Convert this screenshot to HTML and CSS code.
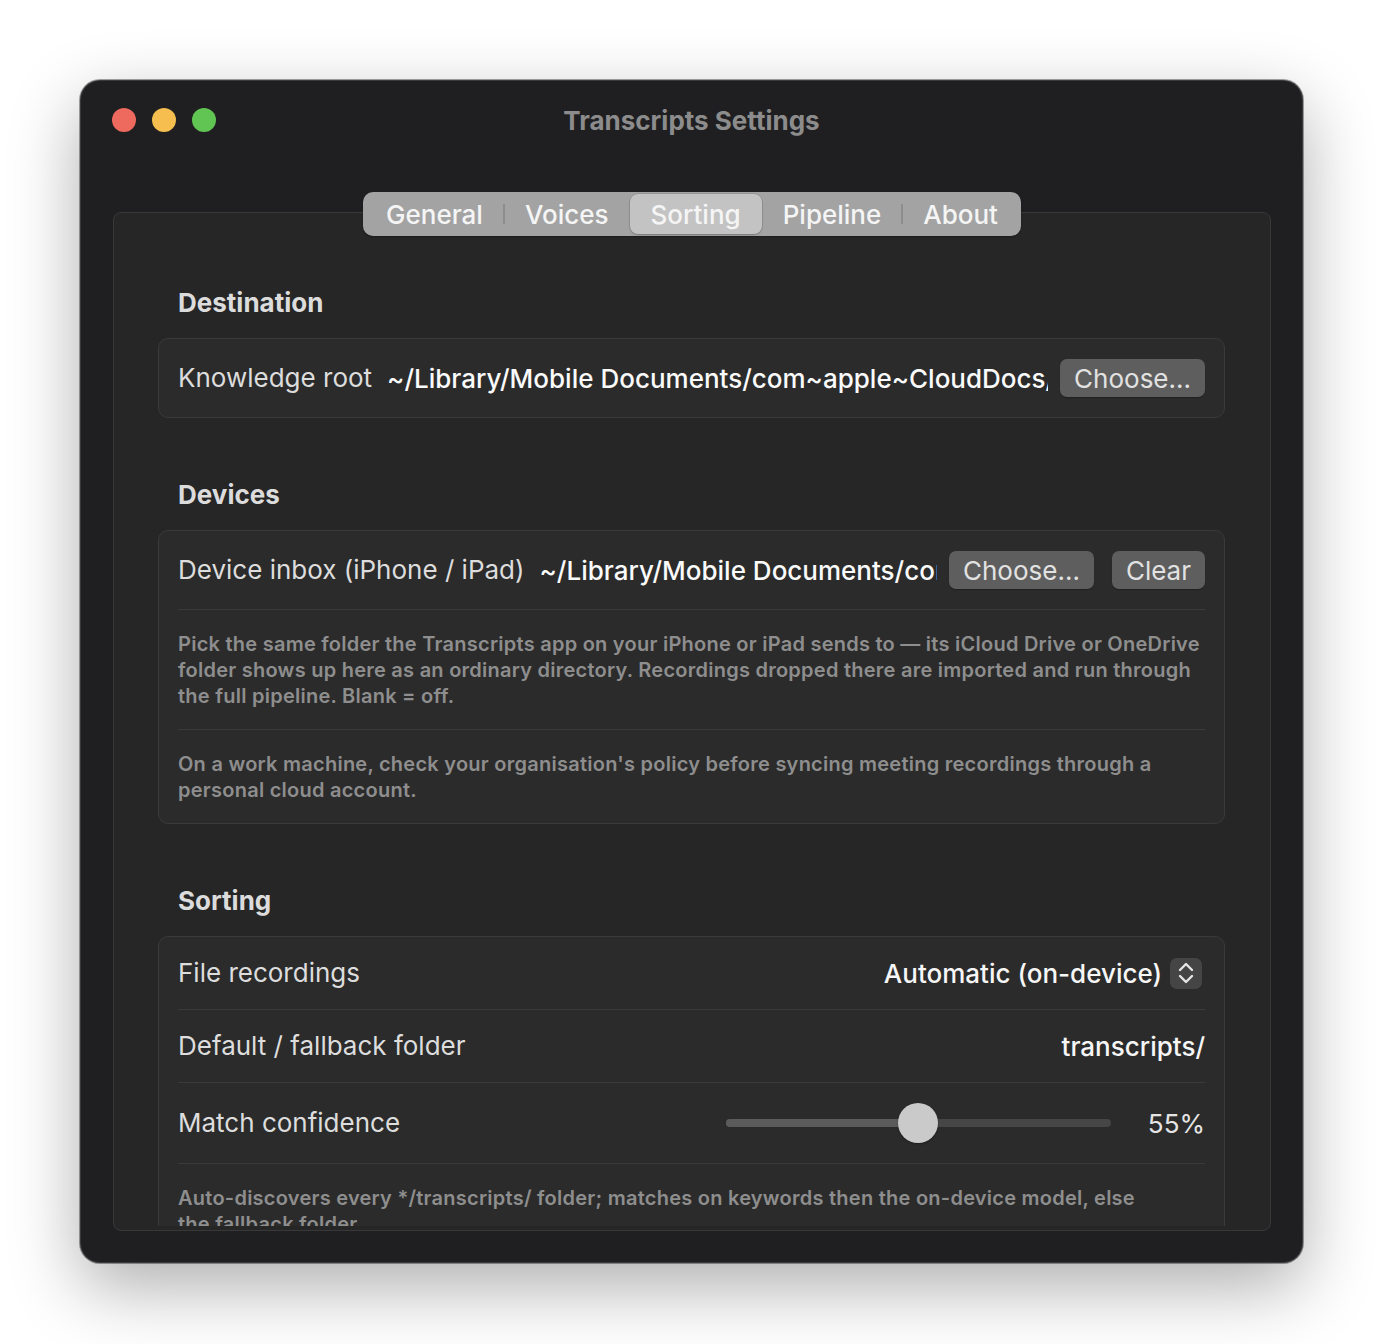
FILE: index.html
```html
<!DOCTYPE html>
<html lang="en">
<head>
    <meta charset="UTF-8">
    <title>Transcripts Settings</title>
    <link rel="stylesheet" href="styles.css">
</head>
<body>
    <div class="window">
        <div class="titlebar">
            <div class="lights">
                <span class="light red"></span>
                <span class="light yellow"></span>
                <span class="light green"></span>
            </div>
            <div class="title">Transcripts Settings</div>
        </div>

        <div class="tabs">
            <span class="tab">General</span>
            <span class="tab">Voices</span>
            <span class="tab active">Sorting</span>
            <span class="tab">Pipeline</span>
            <span class="tab">About</span>
        </div>

        <div class="tabbox">
            <div class="scroll">
                <section class="group">
                    <h2>Destination</h2>
                    <div class="card">
                        <div class="row">
                            <span class="label">Knowledge root</span>
                            <span class="path">~/Library/Mobile Documents/com~apple~CloudDocs/Transcripts</span>
                            <button class="btn">Choose...</button>
                        </div>
                    </div>
                </section>

                <section class="group">
                    <h2>Devices</h2>
                    <div class="card">
                        <div class="row">
                            <span class="label">Device inbox (iPhone / iPad)</span>
                            <span class="path">~/Library/Mobile Documents/com~apple~CloudDocs/Transcripts/Inbox</span>
                            <button class="btn">Choose...</button>
                            <button class="btn">Clear</button>
                        </div>
                        <p class="note">Pick the same folder the Transcripts app on your iPhone or iPad sends to — its iCloud Drive or OneDrive<br>folder shows up here as an ordinary directory. Recordings dropped there are imported and run through<br>the full pipeline. Blank = off.</p>
                        <p class="note">On a work machine, check your organisation's policy before syncing meeting recordings through a<br>personal cloud account.</p>
                    </div>
                </section>

                <section class="group">
                    <h2>Sorting</h2>
                    <div class="card">
                        <div class="row">
                            <span class="label">File recordings</span>
                            <div class="popup">
                                <span>Automatic (on-device)</span>
                                <span class="stepper">
                                    <svg width="18" height="24" viewBox="0 0 18 24" fill="none" stroke="#e6e6e6" stroke-width="2.4" stroke-linecap="round" stroke-linejoin="round">
                                        <path d="M3 9 L9 3 L15 9"/>
                                        <path d="M3 15 L9 21 L15 15"/>
                                    </svg>
                                </span>
                            </div>
                        </div>
                        <div class="row">
                            <span class="label">Default / fallback folder</span>
                            <span class="value">transcripts/</span>
                        </div>
                        <div class="row">
                            <span class="label">Match confidence</span>
                            <div class="slider" style="--pos: 0.5">
                                <div class="track"></div>
                                <div class="fill"></div>
                                <div class="thumb"></div>
                            </div>
                            <span class="pct">55%</span>
                        </div>
                        <p class="note">Auto-discovers every */transcripts/ folder; matches on keywords then the on-device model, else<br>the fallback folder.</p>
                    </div>
                </section>
            </div>
        </div>
    </div>
</body>
</html>
```

FILE: styles.css
```css
body {
    margin: 0;
    min-height: 100vh;
    box-sizing: border-box;
    padding: 80px 0 0 80px;
    background: #ffffff;
    font-family: Inter, "Noto Sans", sans-serif;
    -webkit-font-smoothing: antialiased;
}

.window {
    width: 1223px;
    height: 1183px;
    box-sizing: border-box;
    padding: 0 32px 32px 33px;
    display: flex;
    flex-direction: column;
    background: #1f1f21;
    border-radius: 20px;
    box-shadow: inset 0 0 0 1px rgba(255, 255, 255, 0.12), 0 0 0 1px rgba(0, 0, 0, 0.35), 0 24px 70px rgba(0, 0, 0, 0.32);
}

/* title bar */
.titlebar {
    height: 80px;
    margin: 0 -32px 0 -33px;
    padding: 0 32px;
    display: grid;
    grid-template-columns: 1fr auto 1fr;
    align-items: center;
}
.lights {
    display: flex;
    gap: 16px;
}
.light {
    width: 24px;
    height: 24px;
    border-radius: 50%;
}
.red { background: #ee6a5f; }
.yellow { background: #f5be4f; }
.green { background: #61c554; }
.title {
    font-size: 26px;
    font-weight: 700;
    color: #8c8c8c;
}

/* segmented tabs */
.tabs {
    align-self: center;
    position: relative;
    z-index: 1;
    display: flex;
    height: 44px;
    box-sizing: border-box;
    padding: 2px;
    margin-top: 32px;
    margin-bottom: -24px;
    background: #a3a3a3;
    border-radius: 10px;
    box-shadow: 0 1px 2px rgba(0, 0, 0, 0.3);
}
.tab {
    position: relative;
    display: flex;
    align-items: center;
    padding: 0 21px;
    font-size: 26px;
    font-weight: 500;
    color: #f5f5f5;
    border-radius: 8px;
}
.tab.active {
    background: #c3c3c3;
    box-shadow: 0 0 0 0.5px rgba(0, 0, 0, 0.15), 0 1px 2px rgba(0, 0, 0, 0.2);
}
.tab:not(.active) + .tab:not(.active)::before {
    content: "";
    position: absolute;
    left: -1px;
    top: 10px;
    bottom: 10px;
    width: 2px;
    background: #8d8d8d;
}

/* tab content box */
.tabbox {
    flex: 1;
    min-height: 0;
    display: flex;
    flex-direction: column;
    padding-bottom: 4px;
    background: #262627;
    border: 1px solid #38383a;
    border-radius: 8px;
}
.scroll {
    flex: 1;
    overflow: hidden;
    padding: 74px 45px 0 44px;
}

.group + .group {
    margin-top: 61px;
}
h2 {
    margin: 0 0 19px 20px;
    font-size: 26px;
    line-height: 32px;
    font-weight: 700;
    color: #dcdcdc;
}

.card {
    padding: 0 19px;
    background: #2b2b2b;
    border: 1px solid #3a3a3a;
    border-radius: 10px;
}
.row {
    display: flex;
    align-items: center;
    min-height: 72px;
    box-sizing: border-box;
    padding: 20px 0;
}
.row + .row,
.note {
    border-top: 1px solid #3a3a3a;
}
.label {
    font-size: 26px;
    line-height: 32px;
    color: #dddddd;
    white-space: nowrap;
}
.path {
    flex: 1;
    min-width: 0;
    margin-left: 15px;
    overflow: hidden;
    white-space: nowrap;
    font-size: 26px;
    font-weight: 500;
    color: #fafafa;
}
.btn {
    flex: none;
    height: 38px;
    margin-left: 12px;
    padding: 0 14px;
    border: none;
    border-radius: 7px;
    background: #5e5e5e;
    color: #e2e2e2;
    font: inherit;
    font-size: 26px;
    box-shadow: 0 1px 1px rgba(0, 0, 0, 0.25);
}
.btn + .btn {
    margin-left: 18px;
}

.note {
    margin: 0;
    padding: 21px 0 20px;
    font-size: 20px;
    line-height: 26px;
    font-weight: 600;
    letter-spacing: 0.25px;
    color: #8e8e8e;
    white-space: nowrap;
}

/* popup, value, slider */
.popup {
    margin-left: auto;
    margin-right: 3px;
    display: flex;
    align-items: center;
    gap: 8px;
    font-size: 26px;
    font-weight: 500;
    color: #f6f6f6;
}
.stepper {
    width: 32px;
    height: 31px;
    display: flex;
    align-items: center;
    justify-content: center;
    background: #454545;
    border-radius: 7px;
}
.value {
    margin-left: auto;
    font-size: 26px;
    font-weight: 500;
    color: #f6f6f6;
}
.slider {
    position: relative;
    width: 385px;
    height: 40px;
    margin-left: auto;
}
.track,
.fill {
    position: absolute;
    left: 0;
    top: 16px;
    height: 8px;
    border-radius: 4px;
}
.track {
    right: 0;
    background: #464646;
}
.fill {
    width: calc(20px + (100% - 40px) * var(--pos));
    background: #5b5b5b;
}
.thumb {
    position: absolute;
    top: 0;
    left: calc((100% - 40px) * var(--pos));
    width: 40px;
    height: 40px;
    border-radius: 50%;
    background: #cacaca;
    box-shadow: 0 1px 2px rgba(0, 0, 0, 0.3);
}
.pct {
    margin-left: 37px;
    font-size: 26px;
    color: #e4e4e4;
}
```
